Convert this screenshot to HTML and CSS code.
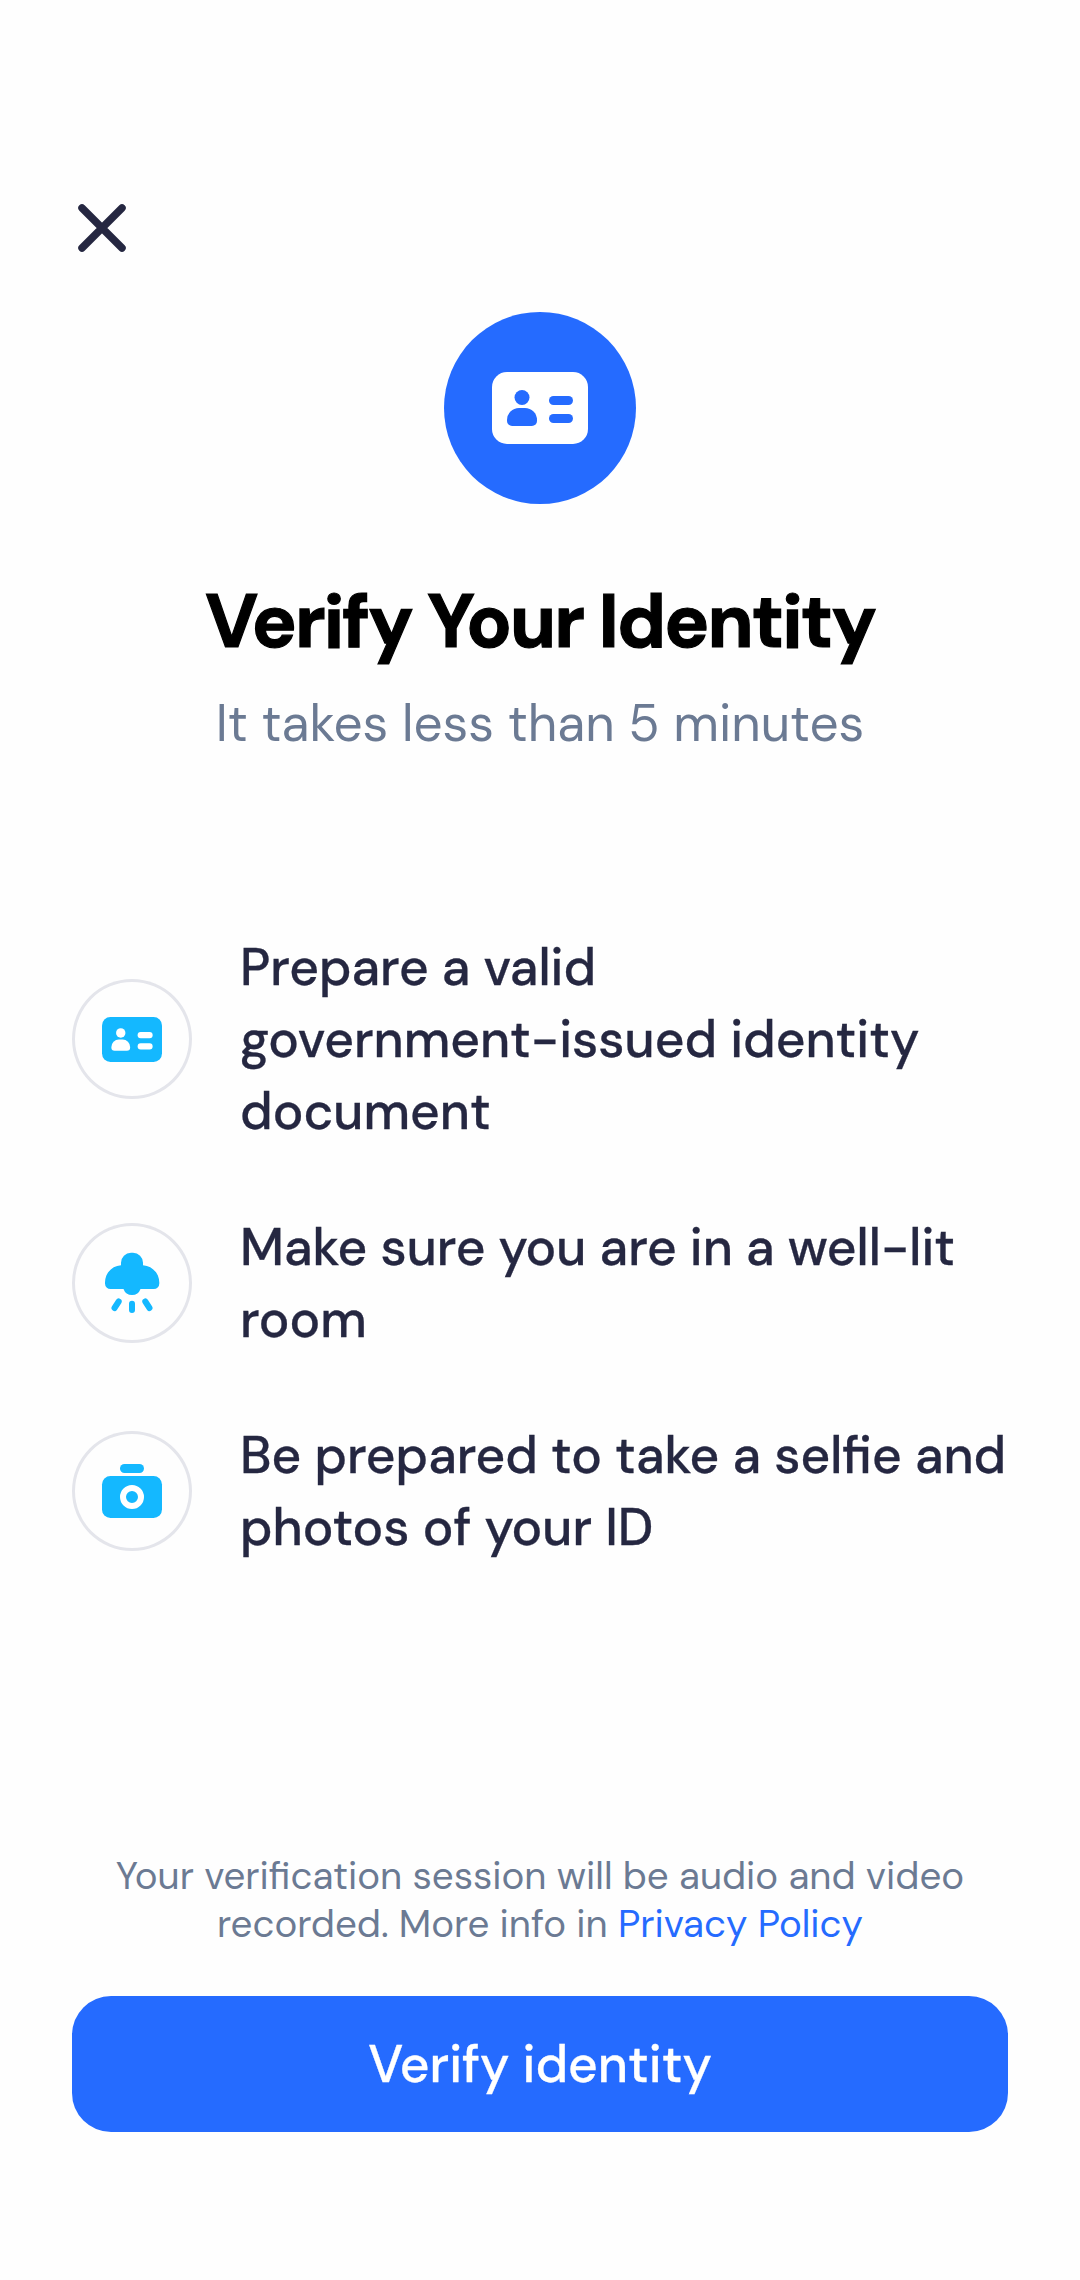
FILE: index.html
```
<!DOCTYPE html>
<html lang="en">
<head>
<meta charset="utf-8">
<title>Verify Your Identity</title>
<link rel="stylesheet" href="styles.css">
</head>
<body>
<main class="screen">
  <button class="close" aria-label="Close">
    <svg viewBox="0 0 48 48" width="48" height="48"><path d="M4 4 44 44M44 4 4 44"/></svg>
  </button>

  <header class="hero">
    <div class="hero-badge">
      <svg viewBox="0 0 32 24" width="96" height="72">
        <rect width="32" height="24" rx="5" fill="#fff"/>
        <g fill="#256bff">
          <circle cx="10" cy="8.5" r="2.5"/>
          <path d="M9 12h2a4 4 0 0 1 4 4v.3a1.7 1.7 0 0 1-1.7 1.7H6.7A1.7 1.7 0 0 1 5 16.3V16a4 4 0 0 1 4-4Z"/>
          <rect x="19" y="8" width="8" height="3" rx="1.5"/>
          <rect x="19" y="14" width="8" height="3" rx="1.5"/>
        </g>
      </svg>
    </div>
    <h1 class="title">Verify Your Identity</h1>
    <p class="subtitle">It takes less than 5 minutes</p>
  </header>

  <ul class="steps">
    <li class="step">
      <span class="step-icon">
        <svg viewBox="0 0 32 24" width="60" height="45">
          <rect width="32" height="24" rx="4.5" fill="#14b8ff"/>
          <g fill="#fff">
            <circle cx="10" cy="8.5" r="2.5"/>
            <path d="M9 12h2a4 4 0 0 1 4 4v.3a1.7 1.7 0 0 1-1.7 1.7H6.7A1.7 1.7 0 0 1 5 16.3V16a4 4 0 0 1 4-4Z"/>
            <rect x="19" y="8" width="8" height="3.3" rx="1.6"/>
            <rect x="19" y="14" width="8" height="3.3" rx="1.6"/>
          </g>
        </svg>
      </span>
      <p class="step-text">Prepare a valid<br>government-issued identity<br>document</p>
    </li>
    <li class="step">
      <span class="step-icon">
        <svg viewBox="0 0 120 120" width="120" height="120">
          <path fill="#14b8ff" d="M59 29.7h2a10 10 0 0 1 10 10V42.3C80.5 43 87.3 50.5 87.3 59.5V60.5A5.5 5.5 0 0 1 81.8 66H68.5A9 9 0 0 1 51.5 66H38.5A5.5 5.5 0 0 1 33 60.5V59.5C33 50.5 39.5 43 49 42.3V39.7a10 10 0 0 1 10-10Z"/>
          <path class="rays" d="M60 80.7v6.3M46.7 78.5 42.5 85M73.3 78.5 77.5 85"/>
        </svg>
      </span>
      <p class="step-text">Make sure you are in a well-lit<br>room</p>
    </li>
    <li class="step">
      <span class="step-icon">
        <svg viewBox="0 0 120 120" width="120" height="120">
          <g fill="#14b8ff">
            <rect x="48" y="33" width="24" height="9" rx="4.5"/>
            <rect x="30" y="45" width="60" height="42" rx="8.5"/>
          </g>
          <circle cx="60" cy="66" r="9" fill="none" stroke="#fff" stroke-width="6"/>
        </svg>
      </span>
      <p class="step-text">Be prepared to take a selfie and<br>photos of your ID</p>
    </li>
  </ul>

  <footer class="footer">
    <p class="notice">Your verification session will be audio and video<br>recorded. More info in <a class="link" href="#">Privacy Policy</a></p>
    <button class="primary">Verify identity</button>
  </footer>
</main>
</body>
</html>
```
FILE: styles.css
```
* { box-sizing: border-box; }

body {
  margin: 0;
  background: #fefefe;
  font-family: "DM Sans", Inter, "Open Sans", sans-serif;
}

h1, p, ul { margin: 0; padding: 0; font-weight: 400; }

button {
  border: 0;
  padding: 0;
  font-family: inherit;
}

.screen {
  display: flex;
  flex-direction: column;
  height: 2280px;
  padding: 204px 72px 148px;
}

.close {
  width: 48px;
  height: 48px;
  margin-left: 6px;
  background: none;
}

.close svg { display: block; }

.close path {
  fill: none;
  stroke: #252741;
  stroke-width: 7.5;
  stroke-linecap: round;
}

.hero {
  display: flex;
  flex-direction: column;
  align-items: center;
  margin-top: 60px;
}

.hero-badge {
  display: flex;
  align-items: center;
  justify-content: center;
  width: 192px;
  height: 192px;
  border-radius: 50%;
  background: #256bff;
}

.title {
  margin-top: 73px;
  font-size: 75px;
  font-weight: 700;
  line-height: 90px;
  letter-spacing: -1.95px;
  -webkit-text-stroke: 1.2px #000;
  color: #000;
}

.subtitle {
  margin-top: 24px;
  font-size: 51.3px;
  line-height: 66px;
  color: #6b7a93;
}

.steps {
  display: flex;
  flex-direction: column;
  gap: 64px;
  margin-top: 174px;
  list-style: none;
}

.step {
  display: flex;
  align-items: center;
  gap: 48px;
}

.step-icon {
  display: flex;
  flex: none;
  align-items: center;
  justify-content: center;
  width: 120px;
  height: 120px;
  border-radius: 50%;
  box-shadow: inset 0 0 0 3px #e4e5eb;
}

.rays {
  fill: none;
  stroke: #14b8ff;
  stroke-width: 6;
  stroke-linecap: round;
}

.step-text {
  margin: 1px 0 -1px;
  font-size: 51.35px;
  font-weight: 500;
  line-height: 72px;
  white-space: nowrap;
  -webkit-text-stroke: 0.3px #252741;
  color: #252741;
}

.footer {
  display: flex;
  flex-direction: column;
  gap: 48px;
  margin-top: auto;
}

.notice {
  font-size: 38.5px;
  line-height: 48px;
  text-align: center;
  color: #6b7a93;
}

.link { color: #256bff; text-decoration: none; }

.primary {
  height: 136px;
  border-radius: 39px;
  background: #256bff;
  color: #fff;
  font-size: 51.4px;
  font-weight: 500;
  -webkit-text-stroke: 0.3px #fff;
}
```
